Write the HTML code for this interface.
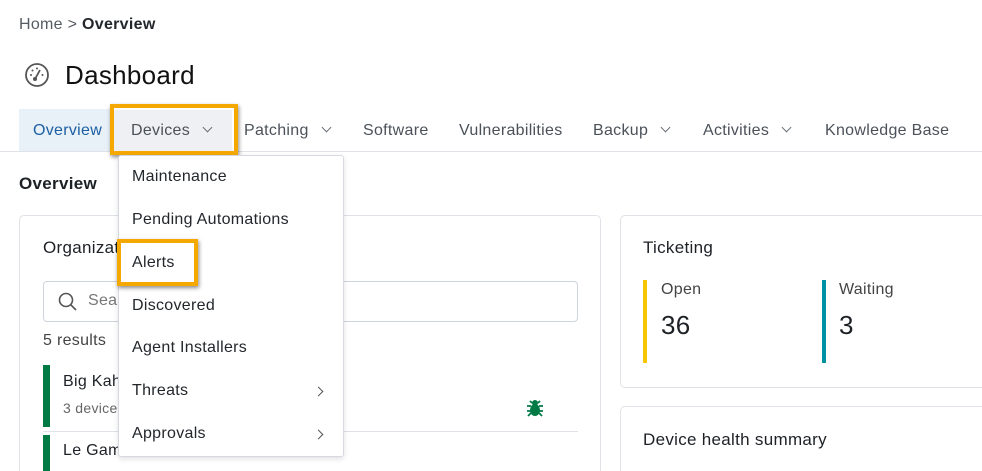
<!DOCTYPE html>
<html><head><meta charset="utf-8"><style>
*{box-sizing:border-box;margin:0;padding:0}
html,body{width:982px;height:471px;overflow:hidden}
body{background:#fff;font-family:"Liberation Sans",sans-serif;color:#1d2126;position:relative;letter-spacing:0.3px}
.a{position:absolute;white-space:nowrap}
.tab{position:absolute;top:122px;font-size:16px;color:#4b5159}
.chev{display:inline-block;width:7px;height:7px;border-right:1.3px solid #6b7079;border-bottom:1.3px solid #6b7079;transform:rotate(45deg);margin-left:14px;position:relative;top:-4px}
.card{position:absolute;border:1px solid #dfe3e7;border-radius:5px;background:#fff;overflow:hidden}
.mi{position:absolute;left:13px;font-size:16px;color:#23272c}
.rc{position:absolute;left:196px;width:7px;height:7px;border-right:1.3px solid #555;border-top:1.3px solid #555;transform:rotate(45deg)}
.ob{position:absolute;border:4px solid #f5a800;box-shadow:1px 2px 4px rgba(0,0,0,.45)}
</style></head><body>
<div class="a" style="left:19px;top:16px;font-size:16px;color:#555b63">Home &gt; <span style="color:#23272c;font-weight:600">Overview</span></div>
<svg class="a" style="left:24px;top:62px" width="26" height="26" viewBox="0 0 26 26"><circle cx="13" cy="13" r="11" fill="none" stroke="#555" stroke-width="1.8"/><line x1="11" y1="17" x2="16" y2="8" stroke="#555" stroke-width="1.8"/><circle cx="11" cy="17" r="2" fill="#555"/><circle cx="7" cy="13" r="1" fill="#555"/><circle cx="8.5" cy="8.5" r="1" fill="#555"/><circle cx="13" cy="6.5" r="1" fill="#555"/><circle cx="18.5" cy="13" r="1" fill="#555"/></svg>
<div class="a" style="left:65px;top:60px;font-size:26px;font-weight:500;color:#111">Dashboard</div>
<div class="a" style="left:0;top:151px;width:982px;height:1px;background:#dfe3e7"></div>
<div class="a" style="left:19px;top:109px;width:92px;height:42px;background:#e8f0f8"></div>
<div class="tab" style="left:33px;color:#1c5fa3">Overview</div>
<div class="a" style="left:114px;top:110px;width:118px;height:41px;background:#eef0f3"></div>
<div class="tab" style="left:131px">Devices<span class="chev"></span></div>
<div class="tab" style="left:244px">Patching<span class="chev"></span></div>
<div class="tab" style="left:363px">Software</div>
<div class="tab" style="left:459px">Vulnerabilities</div>
<div class="tab" style="left:593px">Backup<span class="chev"></span></div>
<div class="tab" style="left:703px">Activities<span class="chev"></span></div>
<div class="tab" style="left:825px">Knowledge Base</div>
<div class="ob" style="left:110px;top:104px;width:128px;height:51px"></div>
<div class="a" style="left:19px;top:174px;font-size:17px;font-weight:600">Overview</div>

<div class="card" style="left:19px;top:215px;width:582px;height:260px">
<div class="a" style="left:23px;top:22px;font-size:17px;font-weight:500">Organizations</div>
<div class="a" style="left:23px;top:65px;width:535px;height:41px;border:1px solid #cfd4da;border-radius:4px">
<svg class="a" style="left:14px;top:10px" width="20" height="20" viewBox="0 0 20 20"><circle cx="8" cy="8" r="6.5" fill="none" stroke="#555" stroke-width="1.6"/><line x1="13" y1="13" x2="18" y2="18" stroke="#555" stroke-width="1.6"/></svg>
<div class="a" style="left:44px;top:10px;font-size:16px;color:#777">Search</div></div>
<div class="a" style="left:23px;top:116px;font-size:16px;color:#444">5 results</div>
<div class="a" style="left:23px;top:149px;width:7px;height:62px;background:#007a45"></div>
<div class="a" style="left:43px;top:157px;font-size:16px">Big Kahuna</div>
<div class="a" style="left:43px;top:184px;font-size:14px;color:#666">3 devices</div>
<svg class="a" style="left:505px;top:182px" width="20" height="20" viewBox="0 0 20 20" fill="#007a45"><ellipse cx="10" cy="12" rx="5" ry="6"/><circle cx="10" cy="5" r="3"/><path d="M2 8h4M14 8h4M2 13h4M14 13h4M3 18l3-3M17 18l-3-3M5 3l2 2M15 3l-2 2" stroke="#007a45" stroke-width="1.8"/></svg>
<div class="a" style="left:23px;top:215px;width:535px;height:1px;background:#dfe3e7"></div>
<div class="a" style="left:23px;top:219px;width:7px;height:60px;background:#007a45"></div>
<div class="a" style="left:43px;top:226px;font-size:16px">Le Gamer</div>
</div>

<div class="card" style="left:620px;top:215px;width:370px;height:173px">
<div class="a" style="left:22px;top:22px;font-size:17px;font-weight:500">Ticketing</div>
<div class="a" style="left:22px;top:64px;width:4px;height:83px;background:#f7c600"></div>
<div class="a" style="left:40px;top:65px;font-size:16px;color:#444">Open</div>
<div class="a" style="left:40px;top:94px;font-size:26px">36</div>
<div class="a" style="left:201px;top:64px;width:4px;height:83px;background:#0092a0"></div>
<div class="a" style="left:218px;top:65px;font-size:16px;color:#444">Waiting</div>
<div class="a" style="left:218px;top:94px;font-size:26px">3</div>
</div>
<div class="card" style="left:620px;top:406px;width:370px;height:70px">
<div class="a" style="left:22px;top:23px;font-size:17px;font-weight:500">Device health summary</div>
</div>

<div class="a" style="left:118px;top:155px;width:226px;height:302px;background:#fff;border:1px solid #d6dae0;border-radius:3px;box-shadow:0 2px 6px rgba(0,0,0,.12)">
<div class="mi" style="top:12px">Maintenance</div>
<div class="mi" style="top:55px">Pending Automations</div>
<div class="mi" style="top:98px">Alerts</div>
<div class="mi" style="top:141px">Discovered</div>
<div class="mi" style="top:183px">Agent Installers</div>
<div class="mi" style="top:226px">Threats</div><div class="rc" style="top:232px"></div>
<div class="mi" style="top:269px">Approvals</div><div class="rc" style="top:275px"></div>
</div>
<div class="ob" style="left:117px;top:239px;width:81px;height:47px"></div>
</body></html>
